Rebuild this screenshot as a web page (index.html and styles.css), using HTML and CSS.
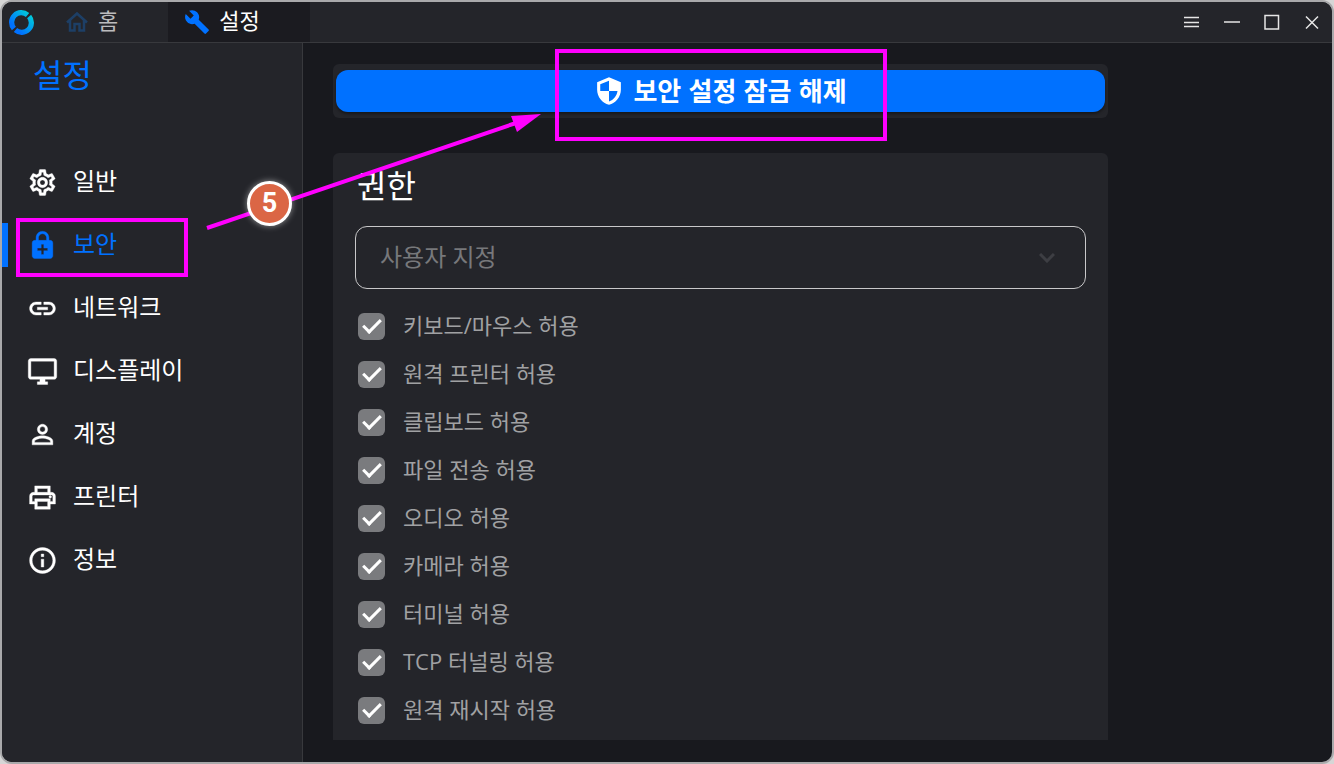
FILE: index.html
```html
<!DOCTYPE html>
<html lang="ko">
<head>
  <meta charset="UTF-8" />
  <title>설정</title>
  <link rel="stylesheet" href="styles.css">
</head>
<body>
  <div class="window">
    <!-- 제목 표시줄 -->
    <header class="titlebar">
      <svg class="logo" viewBox="0 0 24 24" aria-hidden="true">
        <defs>
          <linearGradient id="logoColor" gradientUnits="userSpaceOnUse" x1="3" y1="21" x2="21" y2="3">
            <stop offset="0.2" stop-color="#0071ff" />
            <stop offset="1" stop-color="#00d0d8" />
          </linearGradient>
        </defs>
        <path d="M17.800 4.700A9.300 9.300 0 0 0 4.700 17.800" />
        <path d="M19.300 6.200A9.300 9.300 0 0 1 6.200 19.300" />
      </svg>
      <nav class="tabs">
        <button type="button" class="tab">
          <svg class="home-icon" viewBox="0 0 24 24"><path fill="none" stroke="currentColor" stroke-width="2.500" d="M2 12.500 12 3.500l10 9M5 10.500V20.500H9.500V14h5v6.500H19V10.500" /></svg>
          <span>홈</span>
        </button>
        <button type="button" class="tab active">
          <svg class="wrench-icon" viewBox="0 0 24 24"><path fill="currentColor" d="M22.700 19l-9.100-9.100c.9-2.300.4-5-1.500-6.900-2-2-5-2.400-7.400-1.300L9 6 6 9 1.600 4.700C.4 7.100.9 10.100 2.900 12.100c1.900 1.900 4.600 2.400 6.900 1.500l9.100 9.100c.4.4 1 .4 1.400 0l2.300-2.300c.5-.4.5-1.100.1-1.400z" /></svg>
          <span>설정</span>
        </button>
      </nav>
      <div class="window-buttons">
        <button type="button" aria-label="메뉴"><svg viewBox="0 0 16 16"><path d="M0 3.500h15M0 8.500h15M0 12.500h15" /></svg></button>
        <button type="button" aria-label="최소화"><svg viewBox="0 0 16 16"><path d="M0 8h16" /></svg></button>
        <button type="button" aria-label="최대화"><svg viewBox="0 0 16 16"><path d="M1 1.500h13.500V15H1z" /></svg></button>
        <button type="button" aria-label="닫기"><svg viewBox="0 0 16 16"><path d="M2 2.500l12 12M14 2.500 2 14.500" /></svg></button>
      </div>
    </header>

    <div class="content">
      <!-- 왼쪽 메뉴 -->
      <aside class="sidebar">
        <h1>설정</h1>
        <nav class="menu">
          <a href="#general" class="menu-item">
            <svg viewBox="0 0 24 24"><path d="M19.430 12.980c.04-.32.07-.64.07-.98s-.03-.66-.07-.98l2.110-1.650c.19-.15.24-.42.12-.64l-2-3.460c-.09-.16-.26-.25-.44-.25-.06 0-.12.01-.17.03l-2.490 1c-.52-.4-1.080-.73-1.690-.98l-.38-2.650C14.460 2.180 14.250 2 14 2h-4c-.25 0-.46.18-.49.42l-.38 2.650c-.61.25-1.170.59-1.690.98l-2.490-1c-.06-.02-.12-.03-.18-.03-.17 0-.34.09-.43.25l-2 3.460c-.13.22-.07.49.12.64l2.110 1.650c-.04.32-.07.65-.07.98s.03.66.07.98l-2.110 1.650c-.19.15-.24.42-.12.64l2 3.460c.09.16.26.25.44.25.06 0 .12-.01.17-.03l2.490-1c.52.4 1.080.73 1.690.98l.38 2.650c.03.24.24.42.49.42h4c.25 0 .46-.18.49-.42l.38-2.650c.61-.25 1.170-.59 1.690-.98l2.490 1c.06.02.12.03.18.03.17 0 .34-.09.43-.25l2-3.460c.12-.22.07-.49-.12-.64l-2.110-1.650zm-1.980-1.710c.04.31.05.52.05.73s-.02.43-.05.73l-.14 1.130.89.7 1.080.84-.7 1.210-1.270-.51-1.040-.42-.9.68c-.43.32-.84.56-1.250.73l-1.060.43-.16 1.130-.2 1.350h-1.400l-.19-1.350-.16-1.130-1.060-.43c-.43-.18-.83-.41-1.230-.71l-.91-.7-1.060.43-1.270.51-.7-1.210 1.080-.84.89-.7-.14-1.130c-.03-.31-.05-.54-.05-.74s.02-.43.05-.73l.14-1.130-.89-.7-1.080-.84.7-1.210 1.270.51 1.040.42.9-.68c.43-.32.84-.56 1.250-.73l1.060-.43.16-1.130.2-1.350h1.390l.19 1.350.16 1.130 1.060.43c.43.18.83.41 1.230.71l.91.7 1.060-.43 1.270-.51.7 1.210-1.070.85-.89.7.14 1.130zM12 8c-2.210 0-4 1.790-4 4s1.790 4 4 4 4-1.790 4-4-1.790-4-4-4zm0 6c-1.100 0-2-.9-2-2s.9-2 2-2 2 .9 2 2-.9 2-2 2z" /></svg>
            <span>일반</span>
          </a>
          <a href="#security" class="menu-item selected">
            <svg viewBox="0 0 24 24"><path d="M18 8h-1V6c0-2.760-2.240-5-5-5S7 3.240 7 6v2H6c-1.100 0-2 .9-2 2v10c0 1.100.9 2 2 2h12c1.100 0 2-.9 2-2V10c0-1.100-.9-2-2-2zM8.900 6c0-1.710 1.390-3.100 3.100-3.100s3.100 1.390 3.100 3.100v2H8.900V6zM16 16h-3v3h-2v-3H8v-2h3v-3h2v3h3v2z" /></svg>
            <span>보안</span>
            <i class="highlight"></i>
          </a>
          <a href="#network" class="menu-item">
            <svg viewBox="0 0 24 24"><path d="M3.900 12c0-1.710 1.390-3.100 3.100-3.100h4V7H7c-2.760 0-5 2.240-5 5s2.240 5 5 5h4v-1.900H7c-1.710 0-3.100-1.390-3.100-3.100zM8 13h8v-2H8v2zm9-6h-4v1.900h4c1.710 0 3.100 1.390 3.100 3.100s-1.390 3.100-3.100 3.100h-4V17h4c2.760 0 5-2.240 5-5s-2.240-5-5-5z" /></svg>
            <span>네트워크</span>
          </a>
          <a href="#display" class="menu-item">
            <svg viewBox="0 0 24 24"><path d="M21 2H3c-1.100 0-2 .9-2 2v12c0 1.100.9 2 2 2h7v2H8v2h8v-2h-2v-2h7c1.100 0 2-.9 2-2V4c0-1.100-.9-2-2-2zm0 14H3V4h18v12z" /></svg>
            <span>디스플레이</span>
          </a>
          <a href="#account" class="menu-item">
            <svg viewBox="0 0 24 24"><path d="M12 5.900a2.100 2.100 0 1 1 0 4.200 2.100 2.100 0 0 1 0-4.200m0 9c2.970 0 6.100 1.460 6.100 2.100v1.100H5.900V17c0-.64 3.130-2.100 6.100-2.100M12 4C9.790 4 8 5.790 8 8s1.790 4 4 4 4-1.790 4-4-1.790-4-4-4zm0 9c-2.670 0-8 1.340-8 4v3h16v-3c0-2.660-5.330-4-8-4z" /></svg>
            <span>계정</span>
          </a>
          <a href="#printer" class="menu-item">
            <svg viewBox="0 0 24 24"><path d="M19 8h-1V3H6v5H5c-1.660 0-3 1.340-3 3v6h4v4h12v-4h4v-6c0-1.660-1.340-3-3-3zM8 5h8v3H8V5zm8 12v2H8v-4h8v2zm2-2v-2H6v2H4v-4c0-.55.45-1 1-1h14c.55 0 1 .45 1 1v4h-2z" /><circle cx="18" cy="11.500" r="1" /></svg>
            <span>프린터</span>
          </a>
          <a href="#about" class="menu-item">
            <svg viewBox="0 0 24 24"><path d="M11 7h2v2h-2zm0 4h2v6h-2zm1-9C6.480 2 2 6.480 2 12s4.480 10 10 10 10-4.480 10-10S17.520 2 12 2zm0 18c-4.410 0-8-3.590-8-8s3.590-8 8-8 8 3.590 8 8-3.590 8-8 8z" /></svg>
            <span>정보</span>
          </a>
        </nav>
      </aside>

      <!-- 보안 설정 -->
      <main class="main">
        <div class="scroll-area">
          <section class="card unlock-card">
            <button type="button" class="unlock-button">
              <svg viewBox="0 0 24 24"><path fill="currentColor" fill-rule="evenodd" d="M12 1 2.500 5v6c0 5.550 4.100 10.740 9.500 12 5.400-1.260 9.500-6.450 9.500-12V5L12 1zM12 3.700V12H5V6.600zM12 12h6.800c-.5 4-3.200 7.200-6.800 8.400z" /></svg>
              <span>보안 설정 잠금 해제</span>
            </button>
            <i class="highlight"></i>
          </section>

          <section class="card permission-card">
            <h2 id="permissionTitle">권한</h2>
            <div class="select-box">
              <select aria-labelledby="permissionTitle" disabled>
                <option>사용자 지정</option>
              </select>
              <svg class="chevron" viewBox="0 0 16 10"><path d="M1 1l7 7 7-7" /></svg>
            </div>
            <div class="permissions">
              <label><input type="checkbox" checked disabled> <span>키보드/마우스 허용</span></label>
              <label><input type="checkbox" checked disabled> <span>원격 프린터 허용</span></label>
              <label><input type="checkbox" checked disabled> <span>클립보드 허용</span></label>
              <label><input type="checkbox" checked disabled> <span>파일 전송 허용</span></label>
              <label><input type="checkbox" checked disabled> <span>오디오 허용</span></label>
              <label><input type="checkbox" checked disabled> <span>카메라 허용</span></label>
              <label><input type="checkbox" checked disabled> <span>터미널 허용</span></label>
              <label><input type="checkbox" checked disabled> <span>TCP 터널링 허용</span></label>
              <label><input type="checkbox" checked disabled> <span>원격 재시작 허용</span></label>
            </div>
          </section>
        </div>
      </main>
    </div>

    <!-- 5단계 안내 화살표 -->
    <svg class="arrow" width="340" height="120" viewBox="0 0 340 120" aria-hidden="true">
      <path d="M5 116 314 11" fill="none" stroke="#ff00ff" stroke-width="4" />
      <path d="M339 2 309 4 315 20z" fill="#ff00ff" />
    </svg>
    <div class="step">5</div>
  </div>
</body>
</html>
```
FILE: styles.css
```css
* {
  box-sizing: border-box;
}
body {
  margin: 0;
  background: #d6d6d6;
  color: #fff;
  font-family: "Open Sans", "Noto Sans CJK KR", sans-serif;
}
button {
  padding: 0;
  border: 0;
  background: none;
  color: inherit;
  font-family: inherit;
}
.window {
  position: relative;
  display: flex;
  flex-direction: column;
  height: 100vh;
  border: 2px solid #a9a9ab;
  border-radius: 12px;
  background: #18191e;
  overflow: hidden;
}

/* 제목 표시줄 */
.titlebar {
  display: flex;
  align-items: center;
  flex: none;
  height: 41px;
  padding-left: 7px;
  background: #24252a;
  border-bottom: 1px solid #38393d;
}
.logo {
  width: 25px;
  height: 25px;
  fill: none;
  stroke: url(#logoColor);
  stroke-width: 5;
}
.tabs {
  display: flex;
  align-self: stretch;
  margin-left: 15px;
}
.tab {
  display: flex;
  align-items: center;
  gap: 9px;
  padding: 0 50px 0 16px;
  font-size: 22px;
  line-height: 32px;
  color: #bcbcbe;
}
.tab span {
  padding-bottom: 4px;
}
.tab.active {
  background: #1b1b20;
  color: #fff;
}
.home-icon {
  width: 24px;
  height: 24px;
  color: #1d3f66;
}
.wrench-icon {
  width: 26px;
  height: 26px;
  color: #0071ff;
}
.window-buttons {
  display: flex;
  margin-left: auto;
}
.window-buttons button {
  display: flex;
  align-items: center;
  justify-content: center;
  width: 40px;
  height: 40px;
}
.window-buttons svg {
  width: 16px;
  height: 16px;
  fill: none;
  stroke: #e6e6e6;
  stroke-width: 1.5;
}

.content {
  display: flex;
  flex: 1;
  min-height: 0;
}

/* 왼쪽 메뉴 */
.sidebar {
  flex: none;
  width: 301px;
  background: #24252a;
  border-right: 1px solid #38393d;
}
h1 {
  margin: 12px 0 56px;
  padding-left: 31px;
  font-size: 32px;
  font-weight: 400;
  line-height: 40px;
  color: #0071ff;
}
.menu-item {
  position: relative;
  display: flex;
  align-items: center;
  gap: 15px;
  height: 63px;
  padding-left: 25px;
  color: #fff;
  font-size: 24px;
  line-height: 32px;
  text-decoration: none;
}
.menu-item span {
  padding-bottom: 3px;
}
.menu-item svg {
  width: 31px;
  height: 31px;
  fill: currentColor;
  stroke: currentColor;
  stroke-width: 0.3;
}
.menu-item.selected {
  color: #0071ff;
}
.menu-item.selected::before {
  content: "";
  position: absolute;
  left: 0;
  top: 9px;
  width: 6px;
  height: 44px;
  background: #0071ff;
}

/* 보안 설정 */
.main {
  flex: 1;
  min-width: 0;
  padding: 0 30px 22px;
}
.scroll-area {
  height: 100%;
  padding-top: 21px;
  overflow: hidden;
}
.card {
  max-width: 775px;
  background: #24252a;
  border-radius: 6px;
}
.unlock-card {
  position: relative;
  margin-bottom: 35px;
  padding: 6px 3px;
}
.unlock-button {
  display: flex;
  align-items: center;
  justify-content: center;
  gap: 9px;
  width: 100%;
  height: 42px;
  border-radius: 12px;
  background: #0071ff;
  box-shadow: 0 2px 3px rgba(0, 0, 0, 0.4);
  font-family: "Noto Sans CJK KR", sans-serif;
  font-size: 26px;
  font-weight: 700;
  line-height: 32px;
}
.unlock-button span {
  padding-bottom: 3px;
}
.unlock-button svg {
  width: 30px;
  height: 30px;
}
.permission-card {
  padding: 13px 22px 30px;
}
h2 {
  margin: 0 0 20px 2px;
  font-size: 32px;
  font-weight: 400;
  line-height: 40px;
}
.select-box {
  position: relative;
}
.select-box select {
  appearance: none;
  display: block;
  width: 100%;
  height: 63px;
  padding: 0 60px 2px 24px;
  border: 1px solid #c8c8c9;
  border-radius: 12px;
  background: transparent;
  color: #77787b;
  font-family: inherit;
  font-size: 24px;
  opacity: 1;
}
.chevron {
  position: absolute;
  right: 31px;
  top: 27px;
  width: 16px;
  height: 10px;
  fill: none;
  stroke: #3d3e43;
  stroke-width: 3;
}
.permissions {
  margin-top: 13px;
}
.permissions label {
  display: flex;
  align-items: center;
  gap: 18px;
  height: 48px;
  padding-left: 3px;
  color: #a0a1a3;
  font-size: 22px;
  line-height: 32px;
}
.permissions span {
  padding-bottom: 3px;
}
.permissions input {
  appearance: none;
  display: flex;
  justify-content: center;
  width: 27px;
  height: 27px;
  margin: 0;
  border-radius: 6px;
  background: #7a7b7e;
}
.permissions input:checked::before {
  content: "";
  box-sizing: border-box;
  width: 10px;
  height: 18px;
  margin-top: 2px;
  border: solid #fff;
  border-width: 0 3px 3px 0;
  transform: rotate(45deg);
}

/* 안내 표시 */
.highlight {
  position: absolute;
  border: 4px solid #ff00ff;
}
.menu-item .highlight {
  left: 14px;
  top: 4px;
  width: 172px;
  height: 59px;
}
.unlock-card .highlight {
  left: calc(50% - 166px);
  top: -15px;
  width: 332px;
  height: 92px;
}
.arrow {
  position: absolute;
  left: 200px;
  top: 110px;
}
.step {
  position: absolute;
  left: 245px;
  top: 179px;
  width: 45px;
  height: 45px;
  border: 3px solid #fff;
  border-radius: 50%;
  background: #db6645;
  box-shadow: 0 0 6px rgba(255, 255, 255, 0.5);
  font-family: Roboto, "Liberation Sans", sans-serif;
  font-size: 27px;
  font-weight: 700;
  line-height: 39px;
  text-align: center;
}
```
